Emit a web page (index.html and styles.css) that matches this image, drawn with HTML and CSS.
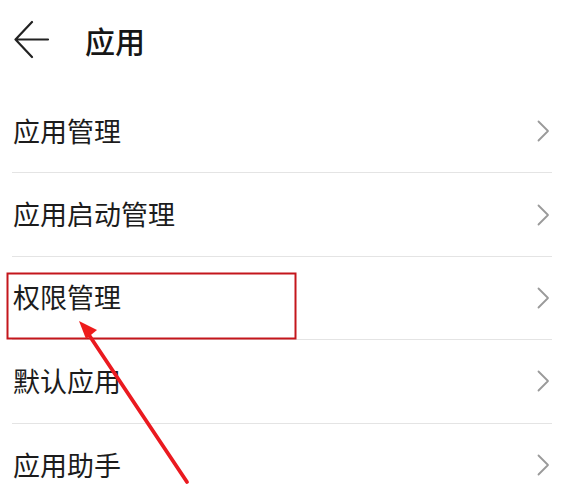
FILE: index.html
```html
<!DOCTYPE html>
<html lang="zh-CN">
<head>
<meta charset="utf-8">
<title>应用</title>
<link rel="stylesheet" href="styles.css">
</head>
<body>
<div class="page">
  <header class="header">
    <svg class="back" width="36" height="40" viewBox="0 0 36 40">
      <path d="M18 2 L1.5 19.5 L18 37 M1.5 19.5 H34" fill="none" stroke="#222" stroke-width="2.2" stroke-linecap="round" stroke-linejoin="round"/>
    </svg>
    <h1 class="title">应用</h1>
  </header>
  <ul class="list">
    <li class="row"><span class="label">应用管理</span><svg class="chev" width="13" height="22" viewBox="0 0 13 22"><path d="M1.5 1.5 L11 11 L1.5 20.5" fill="none" stroke="#9a9a9a" stroke-width="1.8" stroke-linecap="round" stroke-linejoin="round"/></svg></li>
    <li class="row"><span class="label">应用启动管理</span><svg class="chev" width="13" height="22" viewBox="0 0 13 22"><path d="M1.5 1.5 L11 11 L1.5 20.5" fill="none" stroke="#9a9a9a" stroke-width="1.8" stroke-linecap="round" stroke-linejoin="round"/></svg></li>
    <li class="row"><span class="label">权限管理</span><svg class="chev" width="13" height="22" viewBox="0 0 13 22"><path d="M1.5 1.5 L11 11 L1.5 20.5" fill="none" stroke="#9a9a9a" stroke-width="1.8" stroke-linecap="round" stroke-linejoin="round"/></svg></li>
    <li class="row"><span class="label">默认应用</span><svg class="chev" width="13" height="22" viewBox="0 0 13 22"><path d="M1.5 1.5 L11 11 L1.5 20.5" fill="none" stroke="#9a9a9a" stroke-width="1.8" stroke-linecap="round" stroke-linejoin="round"/></svg></li>
    <li class="row"><span class="label">应用助手</span><svg class="chev" width="13" height="22" viewBox="0 0 13 22"><path d="M1.5 1.5 L11 11 L1.5 20.5" fill="none" stroke="#9a9a9a" stroke-width="1.8" stroke-linecap="round" stroke-linejoin="round"/></svg></li>
  </ul>
  <svg class="annotation" width="566" height="500" viewBox="0 0 566 500">
    <rect x="7.5" y="273.5" width="288" height="65" fill="none" stroke="#c4161c" stroke-width="2"/>
    <line x1="87" y1="332" x2="187" y2="482" stroke="#ea1a20" stroke-width="3.8" stroke-linecap="round"/>
    <polygon points="79,321 97,330 86,339" fill="#ee1c1c"/>
  </svg>
</div>
</body>
</html>
```

FILE: styles.css
```css
html, body {
  margin: 0;
  padding: 0;
  background: #ffffff;
}

body {
  width: 566px;
  height: 500px;
  overflow: hidden;
  font-family: "Noto Sans CJK SC", "Noto Sans", sans-serif;
  color: #1c1c1c;
}

.page {
  position: relative;
  width: 566px;
  height: 500px;
}

.header {
  height: 90px;
  box-sizing: border-box;
  display: flex;
  align-items: center;
  padding: 0 0 10px 14px;
  gap: 35px;
}

.back {
  display: block;
  flex: none;
}

.title {
  margin: 0;
  font-size: 30px;
  font-weight: 500;
  line-height: 1;
  color: #161616;
}

.list {
  list-style: none;
  margin: 0 14px 0 12px;
  padding: 0;
}

.row {
  height: 83.4px;
  box-sizing: border-box;
  display: flex;
  align-items: center;
  justify-content: space-between;
  border-bottom: 1px solid #e4e4e4;
  padding: 0 2px 0 1px;
}

.row:last-child {
  border-bottom: none;
}

.label {
  font-size: 27px;
  line-height: 1;
  color: #1c1c1c;
  padding-bottom: 2px;
}

.chev {
  display: block;
  flex: none;
}

.annotation {
  position: absolute;
  left: 0;
  top: 0;
  pointer-events: none;
}
```
